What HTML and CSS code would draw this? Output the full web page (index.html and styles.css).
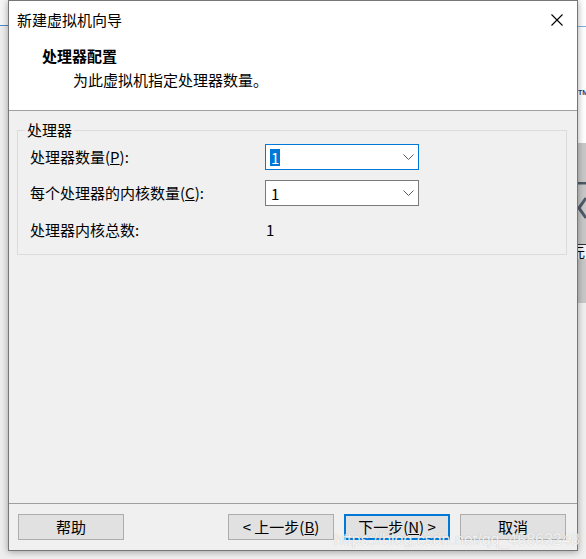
FILE: index.html
```html
<!DOCTYPE html>
<html lang="zh-CN">
<head>
<meta charset="utf-8">
<title>新建虚拟机向导</title>
<link rel="stylesheet" href="styles.css">
</head>
<body>
  <div class="side-left">
    <div class="sl-top"></div>
    <div class="sl-line"></div>
  </div>

  <div class="middle">
    <div class="window">
      <div class="titlebar">
        <span class="title">新建虚拟机向导</span>
        <svg class="close" width="12" height="12" viewBox="0 0 12 12"><path d="M0.5 0.5 L11.5 11.5 M11.5 0.5 L0.5 11.5" stroke="#000" stroke-width="1.1" fill="none"/></svg>
      </div>
      <div class="header">
        <div class="h-title">处理器配置</div>
        <div class="h-sub">为此虚拟机指定处理器数量。</div>
      </div>
      <div class="content">
        <fieldset class="group">
          <legend>处理器</legend>
          <div class="grid">
            <div class="label">处理器数量(<u>P</u>):</div>
            <div class="combo focused">
              <span class="val sel">1</span>
              <svg class="chev" width="11" height="6" viewBox="0 0 11 6"><path d="M0.5 0.5 L5.5 5.5 L10.5 0.5" stroke="#5a5a5a" stroke-width="1" fill="none"/></svg>
            </div>
            <div class="label">每个处理器的内核数量(<u>C</u>):</div>
            <div class="combo">
              <span class="val">1</span>
              <svg class="chev" width="11" height="6" viewBox="0 0 11 6"><path d="M0.5 0.5 L5.5 5.5 L10.5 0.5" stroke="#5a5a5a" stroke-width="1" fill="none"/></svg>
            </div>
            <div class="label row3">处理器内核总数:</div>
            <div class="total row3">1</div>
          </div>
        </fieldset>
      </div>
      <div class="footer">
        <button class="btn">帮助</button>
        <button class="btn back">&lt; 上一步(<u>B</u>)</button>
        <button class="btn next">下一步(<u>N</u>) &gt;</button>
        <button class="btn">取消</button>
      </div>
    </div>
  </div>

  <div class="side-right">
    <div class="rs-top">
      <div class="rs-line"></div>
      <span class="tm">TM</span>
    </div>
    <div class="rs-mid">
      <svg class="rs-arrow" width="8" height="44" viewBox="0 0 8 44"><path d="M0 1 H8" stroke="#4d5b68" stroke-width="3"/><path d="M8 16 L1 26 L8 36" stroke="#4d5b68" stroke-width="3" fill="none"/></svg>
      <span class="yuan">元</span>
    </div>
    <div class="rs-bot"></div>
  </div>

  <div class="watermark">https://blog.csdn.net/qq_45863248</div>
</body>
</html>
```

FILE: styles.css
```css
html, body {
  margin: 0;
  padding: 0;
}

body {
  width: 586px;
  height: 559px;
  overflow: hidden;
  display: flex;
  position: relative;
  background: #f0f0f0;
  font-family: "Noto Sans CJK SC", "Microsoft YaHei", sans-serif;
  font-size: 15px;
  color: #000;
}

/* left strip of desktop behind */
.side-left {
  width: 8px;
  flex: none;
  background: #eeeeee;
}
.sl-top {
  height: 25px;
  background: #f6f6f6;
}
.sl-line {
  height: 1px;
  background: #4f8cca;
}

/* window column */
.middle {
  width: 570px;
  flex: none;
  display: flex;
  flex-direction: column;
}

.window {
  height: 551px;
  box-sizing: border-box;
  border: 1px solid #777;
  background: #f0f0f0;
  display: flex;
  flex-direction: column;
  box-shadow: 0 1px 7px rgba(0, 0, 0, 0.35);
  position: relative;
  z-index: 1;
}

.titlebar {
  height: 38px;
  flex: none;
  background: #fff;
  display: flex;
  align-items: center;
  justify-content: space-between;
  padding: 0 14px 0 8px;
}
.title {
  line-height: 20px;
}
.close {
  display: block;
}

.header {
  height: 72px;
  flex: none;
  box-sizing: border-box;
  background: #fff;
  border-bottom: 1px solid #a0a0a0;
  padding-top: 7px;
}
.h-title {
  font-weight: bold;
  line-height: 20px;
  padding-left: 33px;
}
.h-sub {
  line-height: 20px;
  margin-top: 4px;
  padding-left: 64px;
}

.content {
  flex: 1;
  background: #f0f0f0;
}

.group {
  margin: 9px 10px 0 8px;
  border: 1px solid #dcdcdc;
  padding: 4px 12px 12px 12px;
  min-width: 0;
}
.group legend {
  padding: 0 2px;
  margin-left: -5px;
  line-height: 20px;
}

.grid {
  display: grid;
  grid-template-columns: 235px 154px;
  grid-auto-rows: 26px;
  row-gap: 10px;
  align-items: center;
}
.label {
  line-height: 20px;
}
.row3 {
  margin-top: 1px;
}

.combo {
  height: 26px;
  box-sizing: border-box;
  border: 1px solid #7a7a7a;
  background: #fff;
  display: flex;
  align-items: center;
  justify-content: space-between;
  padding: 0 4px 0 4px;
}
.combo.focused {
  border-color: #0078d7;
}
.val {
  line-height: 17px;
  padding: 0 1px;
}
.val.sel {
  background: #0078d7;
  color: #fff;
}
.chev {
  display: block;
}
.total {
  line-height: 20px;
  padding-left: 1px;
}

.footer {
  height: 47px;
  flex: none;
  box-sizing: border-box;
  border-top: 1px solid #a0a0a0;
  padding: 10px 11px 0 9px;
  display: flex;
  align-items: flex-start;
  gap: 10px;
}
.btn {
  width: 106px;
  height: 26px;
  box-sizing: border-box;
  margin: 0;
  padding: 0;
  background: #e1e1e1;
  border: 1px solid #adadad;
  font-family: inherit;
  font-size: 15px;
  line-height: 22px;
  color: #000;
  text-align: center;
}
.btn.back {
  margin-left: auto;
}
.btn.next {
  border: 2px solid #0078d7;
}

/* right strip of desktop behind */
.side-right {
  width: 8px;
  flex: none;
  overflow: hidden;
  display: flex;
  flex-direction: column;
}
.rs-top {
  height: 143px;
  background: #fff;
}
.rs-line {
  margin-top: 26px;
  height: 1px;
  background: #7fb0dd;
}
.tm {
  display: block;
  margin-top: 62px;
  font-family: "Liberation Sans", sans-serif;
  font-size: 7px;
  font-weight: bold;
  color: #1d3f7a;
  line-height: 8px;
}
.rs-mid {
  height: 160px;
  background: #c8c8c8;
}
.rs-arrow {
  display: block;
  margin-top: 39px;
}
.yuan {
  display: block;
  margin-top: 18px;
  margin-left: -6px;
  font-size: 13px;
  line-height: 14px;
  border-top: 1px solid #333;
  background: #f4f4f4;
  width: 20px;
}
.rs-bot {
  flex: 1;
  background: #f0f0f0;
}

.watermark {
  position: absolute;
  left: 334px;
  top: 531px;
  z-index: 2;
  font-family: "Liberation Sans", Arial, sans-serif;
  font-size: 16px;
  line-height: 18px;
  color: rgba(255, 255, 255, 0.85);
  text-shadow: 0 0 1px rgba(0, 0, 0, 0.25);
  white-space: nowrap;
}
```
